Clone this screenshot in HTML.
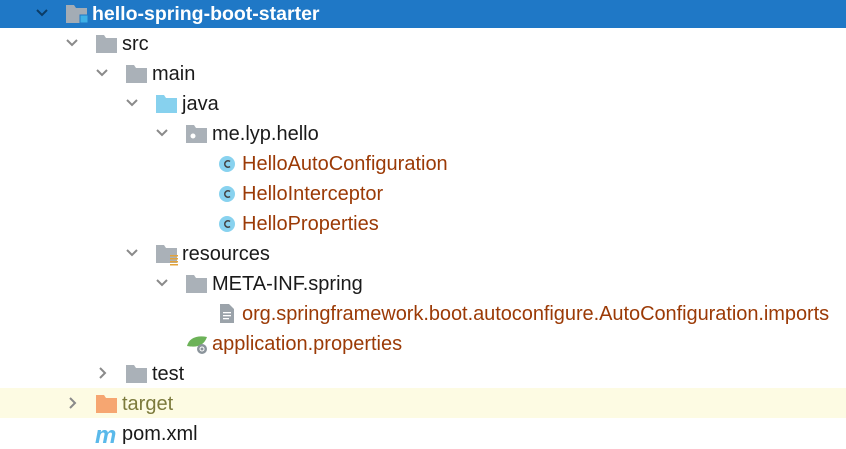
<html><head><style>
body{margin:0;width:846px;height:449px;background:#fff;font-family:"Liberation Sans","Noto Sans CJK SC",sans-serif;font-size:20px;overflow:hidden;position:relative}
.r{position:absolute;left:0;width:846px;height:30px}
.t{position:absolute;white-space:nowrap;color:#1a1a1a;line-height:24px}
.o{color:#9b3a06}
</style></head><body>
<div class="r" style="top:0;height:28px;background:#1f78c6"></div>
<div class="r" style="top:388px;background:#fdfbe3"></div>
<svg width="846" height="449" style="position:absolute;left:0;top:0">
<g fill="none" stroke="#8a8a8a" stroke-width="2">
<path d="M37 10l5 5 5-5" stroke="#0b3c66"/>
<path d="M67 40l5 5 5-5"/><path d="M97 70l5 5 5-5"/><path d="M127 100l5 5 5-5"/><path d="M157 130l5 5 5-5"/>
<path d="M127 250l5 5 5-5"/><path d="M157 280l5 5 5-5"/>
<path d="M100 368l5 5-5 5"/><path d="M70 398l5 5-5 5"/>
</g>
<g>
<path d="M66 5h8l2 3h11v15H66z" fill="#a3acb5"/><rect x="80" y="15" width="8" height="8" fill="#3fb1e6" stroke="#1f78c6"/>
<path d="M96 35h8l2 3h11v15H96z" fill="#aab1b8"/>
<path d="M126 65h8l2 3h11v15h-21z" fill="#aab1b8"/>
<path d="M156 95h8l2 3h11v15h-21z" fill="#87d1ee"/>
<path d="M186 125h8l2 3h11v15h-21z" fill="#aab1b8"/><circle cx="193" cy="136" r="2.5" fill="#fff"/>
<path d="M156 245h8l2 3h11v15h-21z" fill="#aab1b8"/><g fill="#e3a33a"><rect x="170" y="255" width="8" height="1.5"/><rect x="170" y="258" width="8" height="1.5"/><rect x="170" y="261" width="8" height="1.5"/><rect x="170" y="264" width="8" height="1.5"/></g>
<path d="M186 275h8l2 3h11v15h-21z" fill="#aab1b8"/>
<path d="M220 304h9l5 5v14h-14z" fill="#9ba3aa"/><g fill="#fff"><rect x="223" y="312" width="8" height="1.3"/><rect x="223" y="315" width="8" height="1.3"/><rect x="223" y="318" width="6" height="1.3"/></g>
<path d="M187 346c2-8 10-11 20-9-3 8-9 11-20 9z" fill="#6cb258"/><circle cx="202" cy="349" r="5" fill="#8b949b"/><circle cx="202" cy="349" r="2" fill="none" stroke="#fff" stroke-width="1"/>
<path d="M126 365h8l2 3h11v15h-21z" fill="#aab1b8"/>
<path d="M96 395h8l2 3h11v15H96z" fill="#f6a671"/>
<g fill="#88d2ef"><circle cx="227" cy="164" r="8"/><circle cx="227" cy="194" r="8"/><circle cx="227" cy="224" r="8"/></g>
<g fill="none" stroke="#444" stroke-width="1.6"><path d="M230 161.5a3.2 3.2 0 1 0 0 5"/><path d="M230 191.5a3.2 3.2 0 1 0 0 5"/><path d="M230 221.5a3.2 3.2 0 1 0 0 5"/></g>
</g>
<text x="95" y="443" font-family="Liberation Sans" font-style="italic" font-weight="bold" font-size="24" fill="#5ab9ea">m</text>
</svg>
<div class="t" style="left:92px;top:2px;color:#fff;font-weight:bold;font-size:19.5px">hello-spring-boot-starter</div>
<div class="t" style="left:122px;top:32px">src</div>
<div class="t" style="left:152px;top:62px">main</div>
<div class="t" style="left:182px;top:92px">java</div>
<div class="t" style="left:212px;top:122px">me.lyp.hello</div>
<div class="t o" style="left:242px;top:152px">HelloAutoConfiguration</div>
<div class="t o" style="left:242px;top:182px">HelloInterceptor</div>
<div class="t o" style="left:242px;top:212px">HelloProperties</div>
<div class="t" style="left:182px;top:242px">resources</div>
<div class="t" style="left:212px;top:272px">META-INF.spring</div>
<div class="t o" style="left:242px;top:302px;letter-spacing:-0.05px">org.springframework.boot.autoconfigure.AutoConfiguration.imports</div>
<div class="t o" style="left:212px;top:332px">application.properties</div>
<div class="t" style="left:152px;top:362px">test</div>
<div class="t" style="left:122px;top:392px;color:#7c7a3c">target</div>
<div class="t" style="left:122px;top:422px">pom.xml</div>
</body></html>
